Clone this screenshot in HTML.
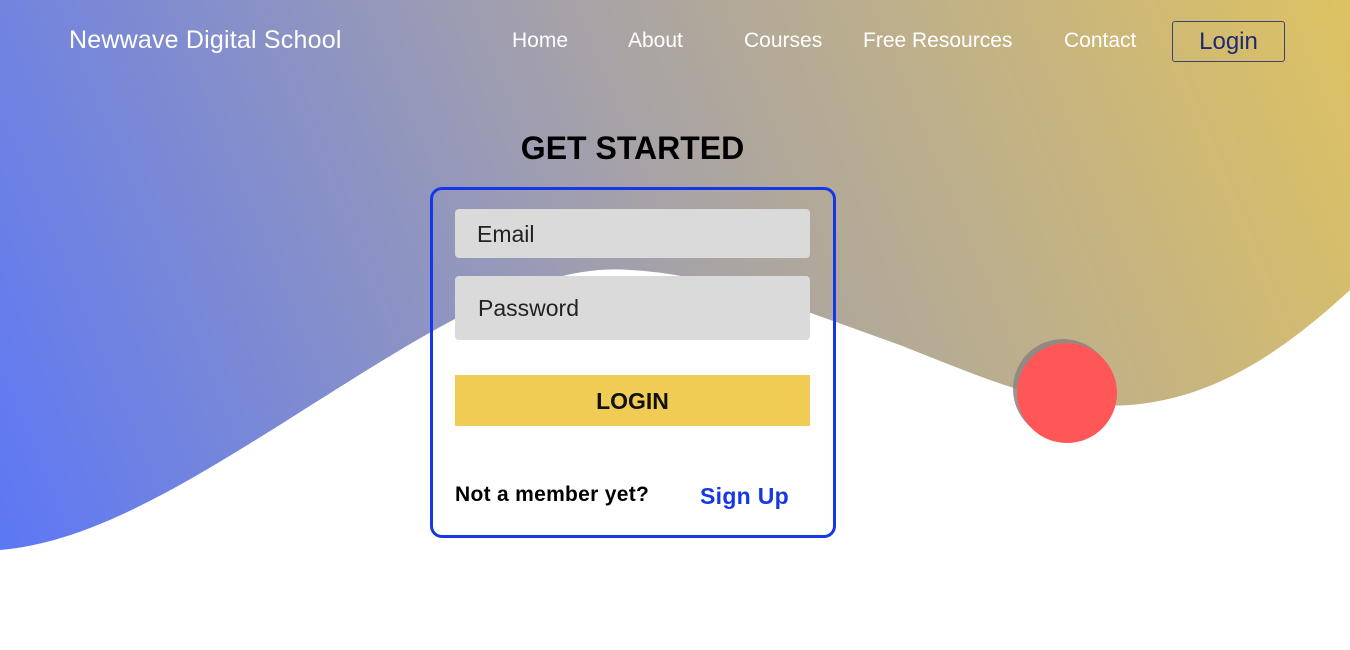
<!DOCTYPE html>
<html><head><meta charset="utf-8"><style>
body{margin:0;width:1350px;height:650px;overflow:hidden;background:#fff;font-family:"Liberation Sans",sans-serif;position:relative}
svg.bg{position:absolute;left:0;top:0}
.a{position:absolute;white-space:nowrap}
.nav{color:#fff;font-size:21px;top:29px}
.logo{left:69px;top:26px;color:#fff;font-size:25px;letter-spacing:0.2px}
.lbtn{left:1172px;top:21px;width:111px;height:39px;border:1px solid #3b4472;border-radius:3px;color:#1d2a6e;font-size:24px;text-align:center;line-height:40px}
h1{position:absolute;left:0;width:1265px;text-align:center;top:130px;margin:0;font-size:32px;font-weight:bold;color:#000}
.card{position:absolute;left:430px;top:187px;width:400px;height:345px;border:3px solid #1637e8;border-radius:12px;box-sizing:content-box}
.in{position:absolute;left:455px;width:355px;background:#dadada;border-radius:4px;color:#222;font-size:23px}
.btn{position:absolute;left:455px;top:375px;width:355px;height:51px;background:#f0cc55;text-align:center;line-height:52px;font-weight:bold;font-size:23px;color:#111}
</style></head><body>
<svg class="bg" width="1350" height="650">
<defs><linearGradient id="g" gradientUnits="userSpaceOnUse" x1="0" y1="560" x2="1350" y2="0">
<stop offset="0" stop-color="#5c77f6"/><stop offset="0.5" stop-color="#a6a2a8"/><stop offset="1" stop-color="#dec262"/></linearGradient></defs>
<path d="M0,550 C120,540 250,440 400,350 C500,290 570,265 630,270 C720,275 800,310 900,345 C1000,385 1060,410 1130,405 C1220,398 1290,345 1350,290 V0 H0Z" fill="url(#g)"/>
<circle cx="1063" cy="389" r="50" fill="#8a8480" opacity="0.85"/>
<circle cx="1067" cy="393" r="50" fill="#ff5757"/>
</svg>
<div class="a logo">Newwave Digital School</div>
<div class="a nav" style="left:512px">Home</div>
<div class="a nav" style="left:628px">About</div>
<div class="a nav" style="left:744px">Courses</div>
<div class="a nav" style="left:863px">Free Resources</div>
<div class="a nav" style="left:1064px">Contact</div>
<div class="a lbtn">Login</div>
<h1>GET STARTED</h1>
<div class="card"></div>
<div class="in" style="top:209px;height:49px;line-height:50px;padding-left:22px;width:333px">Email</div>
<div class="in" style="top:276px;height:64px;line-height:64px;padding-left:23px;width:332px">Password</div>
<div class="btn">LOGIN</div>
<div class="a" style="left:455px;top:483px;font-weight:bold;font-size:21px;letter-spacing:0.3px;color:#000">Not a member yet?</div>
<div class="a" style="left:700px;top:483px;font-weight:bold;font-size:23px;letter-spacing:0.3px;color:#1637e8">Sign Up</div>
</body></html>
